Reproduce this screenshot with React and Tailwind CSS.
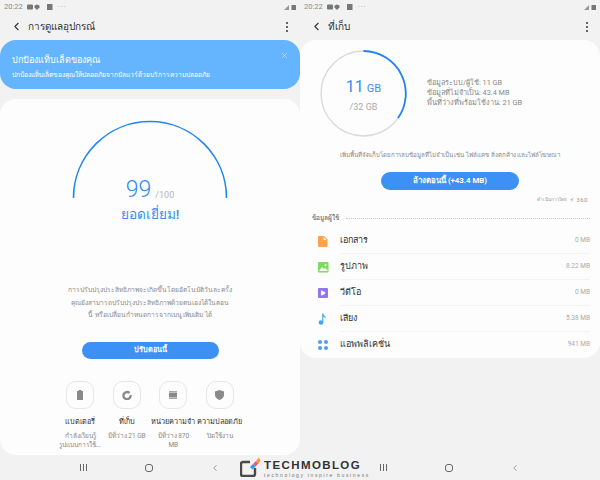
import { ChevronLeft, X, Play } from 'lucide-react';

const font = "font-['Roboto','Noto_Sans','DejaVu_Sans',sans-serif]";

function StatusBar() {
  return (
    <div className="h-[13px] pt-[1px] pl-[4px] pr-[3px] flex items-center text-[#8a8a8a] text-[7.500px]">
      <span className="mr-[4px]">20:22</span>
      <svg width="26" height="7" viewBox="0 0 26 7" fill="#777">
        <rect x="0" y="0.5" width="6" height="5" rx="1" />
        <path d="M10 0.5l2.500 1v2l-2.500 2.500-2.500-2.500v-2z" />
        <rect x="20" y="0" width="5.500" height="6" />
      </svg>
      <span className="ml-[5px] text-[#999] tracking-[1px] leading-none">···</span>
      <div className="ml-auto flex items-center">
        <svg width="13" height="7" viewBox="0 0 13 7" fill="#999">
          <path d="M0 6l5-5v5z" />
          <rect x="7.500" y="1" width="4.500" height="5" rx="0.500" fill="#777" />
        </svg>
      </div>
    </div>
  );
}

function Header({ title }) {
  return (
    <div className="h-[27px] flex items-center pl-[10px] pr-[12px]">
      <ChevronLeft size={13} strokeWidth={2} className="text-[#333]" />
      <span className="ml-[5px] text-[10px] font-medium text-[#333]">{title}</span>
      <div className="ml-auto flex flex-col gap-[2px]">
        <span className="w-[2px] h-[2px] bg-[#333] rounded-full" />
        <span className="w-[2px] h-[2px] bg-[#333] rounded-full" />
        <span className="w-[2px] h-[2px] bg-[#333] rounded-full" />
      </div>
    </div>
  );
}

function NavBar() {
  return (
    <div className="mt-auto w-[140px] mx-auto h-[25px] flex items-center justify-between">
      <div className="flex gap-[2px] h-[7px]">
        <span className="w-[1px] h-full bg-[#666]" />
        <span className="w-[1px] h-full bg-[#666]" />
        <span className="w-[1px] h-full bg-[#666]" />
      </div>
      <div className="w-[8px] h-[8px] border border-[#666] rounded-[3px]" />
      <ChevronLeft size={10} strokeWidth={1.500} className="text-[#666]" />
    </div>
  );
}

const tiles = [
  { name: 'แบตเตอรี่', sub: ['กำลังเรียนรู้', 'รูปแบบการใช้...'], icon: <svg width="8" height="10" viewBox="0 0 8 10" fill="#8a8a8a"><path d="M2.500 0h3v1H7v9H1V1h1.500z" /></svg> },
  { name: 'ที่เก็บ', sub: ['มีที่ว่าง 21 GB'], icon: <svg width="10" height="10" viewBox="0 0 10 10" fill="none" stroke="#8a8a8a" strokeWidth="2.400"><path d="M7.500 3A3.600 3.600 0 1 0 8.600 5.200" /></svg> },
  { name: 'หน่วยความจำ', sub: ['มีที่ว่าง 870', 'MB'], icon: <svg width="10" height="10" viewBox="0 0 10 10" fill="#8a8a8a"><rect x="1" y="2.500" width="8" height="5" /><path d="M1 1h8v.7H1zM1 8.300h8V9H1z" /></svg> },
  { name: 'ความปลอดภัย', sub: ['ปิดใช้งาน'], icon: <svg width="9" height="10" viewBox="0 0 9 10" fill="#8a8a8a"><path d="M4.500 0L9 1.500V5c0 2.500-2 4-4.500 5C2 9 0 7.500 0 5V1.500z" /></svg> },
];

function DeviceCare() {
  return (
    <div className="w-[300px] h-full flex flex-col">
      <StatusBar />
      <Header title="การดูแลอุปกรณ์" />
      <div className="h-[49px] bg-[#64b4fe] rounded-[16px] px-[12px] pt-[13px] text-white relative">
        <div className="text-[9px] leading-[14px] font-medium">ปกป้องแท็บเล็ตของคุณ</div>
        <div className="text-[6.700px] leading-[12px] mt-[2px]">ปกป้องแท็บเล็ตของคุณให้ปลอดภัยจากมัลแวร์ด้วยบริการความปลอดภัย</div>
        <X size={9} strokeWidth={1.500} className="absolute right-[11px] top-[11px] text-[#d7ecff]" />
      </div>
      <div className="mt-[10px] h-[356px] bg-[#fdfdfd] rounded-[16px] flex flex-col items-center">
        <svg width="160" height="80" viewBox="0 0 160 80" fill="none" className="mt-[21px] shrink-0">
          <path d="M3.500 78A76.500 76.500 0 0 1 156.500 78" stroke="#1e86f2" strokeWidth="1.600" />
        </svg>
        <div className="-mt-[23px] flex items-end h-[26px]">
          <span className="text-[23px] leading-[26px] font-light text-[#2f8bef]">99</span>
          <span className="ml-[4px] text-[9px] leading-[15px] text-[#b5b5b5]">/100</span>
        </div>
        <div className="mt-[2px] text-[13.700px] leading-[18px] font-medium text-[#3a8ff0]">ยอดเยี่ยม!</div>
        <div className="mt-[61px] text-center text-[6.700px] leading-[12.500px] text-[#8c8c8c] whitespace-nowrap">
          การปรับปรุงประสิทธิภาพจะเกิดขึ้นโดยอัตโนมัติวันละครั้ง<br />
          คุณยังสามารถปรับปรุงประสิทธิภาพด้วยตนเองได้ในตอน<br />
          นี้ หรือเปลี่ยนกำหนดการจากเมนู เพิ่มเติม ได้
        </div>
        <button className="mt-[20px] w-[137px] h-[17px] shrink-0 rounded-full bg-[#3d90f5] text-white text-[7.300px] font-bold leading-none">ปรับตอนนี้</button>
        <div className="mt-[22px] w-[186px] flex justify-between">
          {tiles.map((t) => (
            <div key={t.name} className="w-[46px] flex flex-col items-center text-center">
              <div className="w-[28px] h-[28px] border border-[#e6e6e6] rounded-[10px] flex items-center justify-center">{t.icon}</div>
              <div className="mt-[7px] text-[7.300px] leading-[12px] font-medium text-[#333] whitespace-nowrap">{t.name}</div>
              <div className="mt-[4px] text-[6.500px] leading-[9px] text-[#888] whitespace-nowrap">
                {t.sub.map((line) => <div key={line}>{line}</div>)}
              </div>
            </div>
          ))}
        </div>
      </div>
      <NavBar />
    </div>
  );
}

const rows = [
  { name: 'เอกสาร', size: '0 MB', icon: <svg width="10" height="11" viewBox="0 0 10 11"><path d="M1 0h5l3.500 3.500V10a1 1 0 0 1-1 1H1a1 1 0 0 1-1-1V1a1 1 0 0 1 1-1z" fill="#ffa24d" /><path d="M5.500 1v3h3z" fill="#fff" /></svg> },
  { name: 'รูปภาพ', size: '8.22 MB', icon: <svg width="11" height="11" viewBox="0 0 11 11"><rect width="10.500" height="10.500" rx="1" fill="#7ddc5f" /><path d="M1 9l3-4 2 2 1.500-1L10 9z" fill="#fff" /><circle cx="7.500" cy="3" r="1" fill="#fff" /></svg> },
  { name: 'วีดีโอ', size: '0 MB', icon: <div className="w-[10px] h-[10px] bg-[#9473f2] rounded-[1px] flex items-center justify-center"><Play size={6} fill="#fff" stroke="#fff" /></div> },
  { name: 'เสียง', size: '5.38 MB', icon: <svg width="10" height="12" viewBox="0 0 10 12" fill="#3fa9f5"><circle cx="3" cy="9.500" r="2.300" /><rect x="4.200" y="0.500" width="1.200" height="9" /><path d="M5 0.500c.5 2 3 2.500 3 5-.8-1.200-2-1.700-3-2z" /></svg> },
  { name: 'แอพพลิเคชั่น', size: '941 MB', icon: <div className="grid grid-cols-2 gap-[2px] w-[10px]">{[0, 1, 2, 3].map((i) => <span key={i} className="w-[4px] h-[4px] rounded-full bg-[#4f9cf5]" />)}</div> },
];

function Storage() {
  return (
    <div className="w-[300px] h-full flex flex-col">
      <StatusBar />
      <Header title="ที่เก็บ" />
      <div className="h-[318px] bg-[#fdfdfd] rounded-[16px] flex flex-col">
        <div className="flex pl-[20px] pt-[10px]">
          <div className="w-[87px] h-[87px] relative shrink-0">
            <svg width="87" height="87" viewBox="0 0 87 87" fill="none">
              <circle cx="43.500" cy="43.500" r="42.500" stroke="#d9d9d9" strokeWidth="1.300" />
              <path d="M43.500 1A42.500 42.500 0 0 1 78 68" stroke="#1e86f2" strokeWidth="1.800" />
            </svg>
            <div className="absolute inset-0 flex flex-col items-center justify-center pt-[3px]">
              <div className="text-[#3a8ff0] leading-[18px]"><span className="text-[16px]">11</span><span className="text-[11px] ml-[3px]">GB</span></div>
              <div className="text-[#aaa] text-[9px] leading-[12px] mt-[3px]">/32 GB</div>
            </div>
          </div>
          <div className="ml-[20px] mt-[28px] text-[7.300px] leading-[10px] text-[#888] whitespace-nowrap">
            <div>ข้อมูลระบบ/ผู้ใช้: 11 GB</div>
            <div>ข้อมูลที่ไม่จำเป็น: 43.4 MB</div>
            <div>พื้นที่ว่างที่พร้อมใช้งาน: 21 GB</div>
          </div>
        </div>
        <div className="mt-[13px] text-center text-[6.200px] leading-[10px] text-[#888] whitespace-nowrap">เพิ่มพื้นที่จัดเก็บโดยการลบข้อมูลที่ไม่จำเป็น เช่น ไฟล์แคช สิ่งตกค้าง และไฟล์โฆษณา</div>
        <button className="mt-[12px] mx-auto w-[138px] h-[18px] shrink-0 rounded-full bg-[#3d90f5] text-white text-[7.800px] font-bold leading-none">ล้างตอนนี้ (+43.4 MB)</button>
        <div className="mt-[6px] pr-[12px] flex justify-end items-center gap-[3px] text-[4.500px] leading-[8px] text-[#999]">
          <span>ดำเนินการโดย</span><span className="text-[6px] tracking-[0.500px]">⚡ 360</span>
        </div>
        <div className="mt-[9px] pl-[12px] pr-[10px] flex items-center gap-[7px]">
          <span className="text-[6.500px] leading-[10px] text-[#555]">ข้อมูลผู้ใช้</span>
          <span className="flex-1 border-t border-dotted border-[#ccc]" />
        </div>
        <div className="mt-[5px] flex flex-col">
          {rows.map((r, i) => (
            <div key={r.name} className="h-[26px] flex items-center pl-[17px] pr-[10px]">
              <div className="w-[12px] flex justify-center">{r.icon}</div>
              <div className={`ml-[11px] flex-1 h-full flex items-center justify-between ${i < 4 ? 'border-b border-[#f3f3f3]' : ''}`}>
                <span className="text-[9px] text-[#333]">{r.name}</span>
                <span className="text-[6.500px] text-[#aaa]">{r.size}</span>
              </div>
            </div>
          ))}
        </div>
      </div>
      <NavBar />
    </div>
  );
}

export default function App() {
  return (
    <div className={`w-[600px] h-[480px] bg-[#f2f2f2] flex relative overflow-hidden ${font}`}>
      <DeviceCare />
      <Storage />
      {/* watermark sits over the nav bars */}
      <div className="absolute left-[240px] top-[457px] flex items-start">
        <svg width="22" height="20" viewBox="0 0 22 20" fill="none">
          <path d="M10 5H3A2 2 0 0 0 1 7v10a2 2 0 0 0 2 2h10a2 2 0 0 0 2-2v-6" stroke="#4a4a4a" strokeWidth="2.400" />
          <path d="M10 10l3-3 2.500 2.500-3 3z" fill="#2f9bf0" />
          <path d="M13 7l3-3 2.500 2.500-3 3z" fill="#f0567c" />
          <path d="M16 4l3-3.500 1.500 3.500-2 2.500z" fill="#f79a32" />
        </svg>
        <div className="ml-[2px] mt-[2px] flex flex-col">
          <span className="text-[11.500px] leading-[12px] font-bold text-[#333] tracking-[1.400px] font-['Liberation_Sans',sans-serif]">TECHMOBLOG</span>
          <span className="mt-[1px] text-[5px] leading-[6px] text-[#777] tracking-[1.650px] whitespace-nowrap font-['Liberation_Sans',sans-serif]">technology inspire business</span>
        </div>
      </div>
    </div>
  );
}
